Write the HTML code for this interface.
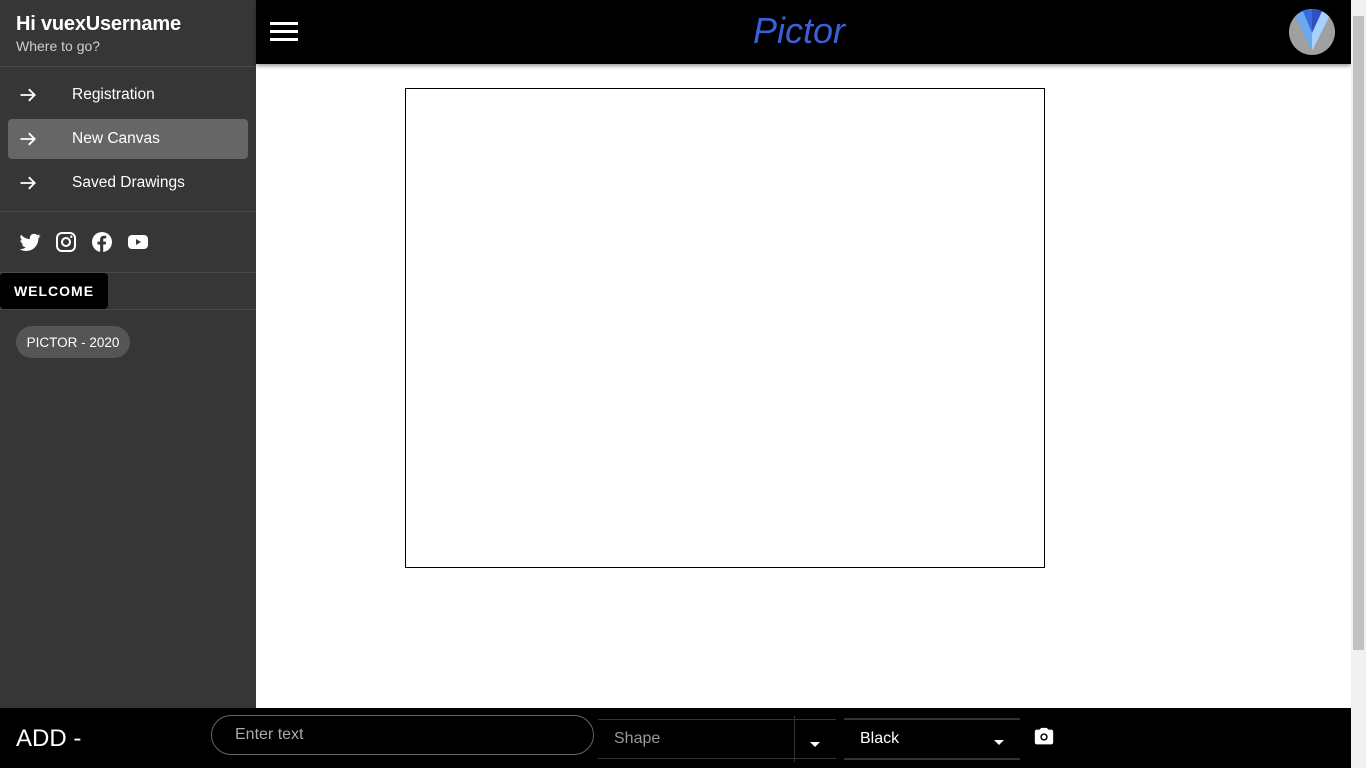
<!DOCTYPE html>
<html><head><meta charset="utf-8">
<style>
*{box-sizing:border-box;margin:0;padding:0}
body{width:1366px;height:768px;overflow:hidden;background:#fff;font-family:"Liberation Sans",sans-serif;position:relative}
.side{position:absolute;left:0;top:0;width:256px;height:708px;background:#363636;color:#fff}
.hd{height:67px;border-bottom:1px solid #4a4a4a;padding:12px 16px}
.hd .t{font-size:20px;font-weight:bold;line-height:24px;letter-spacing:-0.2px}
.hd .s{font-size:14px;color:#cfcfcf;line-height:20px}
.nav{padding:8px;border-bottom:1px solid #4a4a4a;height:145px}
.it{height:40px;border-radius:4px;margin-bottom:4px;display:flex;align-items:center;font-size:15.5px}
.it.a{background:#666}
.it svg{margin-left:10px;margin-right:34px}
.soc{height:61px;border-bottom:1px solid #4a4a4a;display:flex;align-items:center;padding-left:18px;gap:12px}
.wel{position:absolute;left:0;top:273px;width:108px;height:36px;background:#000;border-radius:4px;font-size:14px;font-weight:bold;letter-spacing:1px;display:flex;align-items:center;justify-content:center}
.ln{position:absolute;left:0;top:309px;width:256px;height:1px;background:#4a4a4a}
.chip{position:absolute;left:16px;top:326px;width:114px;height:32px;border-radius:16px;background:#555;font-size:13.5px;display:flex;align-items:center;justify-content:center}
.top{position:absolute;left:256px;top:0;width:1095px;height:64px;background:#000;box-shadow:0 2px 4px rgba(0,0,0,.4)}
.ham{position:absolute;left:14px;top:22px;width:28px}
.ham i{display:block;height:3px;background:#fff;margin-bottom:5px}
.title{position:absolute;left:497px;top:10px;font-size:36px;font-style:italic;color:#3b5fd6}
.canvas{position:absolute;left:405px;top:88px;width:640px;height:480px;border:1px solid #000}
.foot{position:absolute;left:0;top:708px;width:1351px;height:60px;background:#000;color:#fff}
.add{position:absolute;left:16px;top:17px;font-size:24px}
.inp{position:absolute;left:211px;top:7px;width:383px;height:40px;border:1px solid #666;border-radius:20px;padding-left:23px;font-size:16px;color:#aaa;line-height:38px}
.sh{position:absolute;left:598px;top:11px;width:238px;height:40px;border-top:1px solid #333;border-bottom:1px solid #333;font-size:16px;color:#999;padding-left:16px;line-height:38px}
.sh .v{position:absolute;left:196px;top:-4px;width:1px;height:46px;background:#333}
.car{position:absolute;width:0;height:0;border-left:5px solid transparent;border-right:5px solid transparent;border-top:5px solid #fff}
.bl{position:absolute;left:844px;top:10px;width:176px;height:42px;border-top:2px solid #333;border-bottom:2px solid #333;font-size:16px;padding-left:16px;line-height:38px}
.sb{position:absolute;left:1351px;top:0;width:15px;height:768px;background:#f1f1f1}
.sb .th{position:absolute;left:2px;top:16px;width:11px;height:634px;background:#c1c1c1}
</style></head><body>
<div class="side">
 <div class="hd"><div class="t">Hi vuexUsername</div><div class="s">Where to go?</div></div>
 <div class="nav">
  <div class="it"><svg width="20" height="20" viewBox="0 0 24 24"><path d="M3 12h17M13 5l7 7-7 7" stroke="#fff" stroke-width="2.2" fill="none"/></svg>Registration</div>
  <div class="it a"><svg width="20" height="20" viewBox="0 0 24 24"><path d="M3 12h17M13 5l7 7-7 7" stroke="#fff" stroke-width="2.2" fill="none"/></svg>New Canvas</div>
  <div class="it"><svg width="20" height="20" viewBox="0 0 24 24"><path d="M3 12h17M13 5l7 7-7 7" stroke="#fff" stroke-width="2.2" fill="none"/></svg>Saved Drawings</div>
 </div>
 <div class="soc">
  <svg width="24" height="24" viewBox="0 0 24 24"><path fill="#fff" d="M22.5 5.9c-.8.4-1.6.6-2.5.7.9-.5 1.6-1.4 1.900-2.4-.8.5-1.8.8-2.700 1-.8-.9-1.900-1.400-3.100-1.400-2.400 0-4.300 1.900-4.300 4.300 0 .3 0 .7.1 1-3.600-.2-6.800-1.900-8.900-4.500-.4.6-.6 1.400-.6 2.200 0 1.500.8 2.800 1.900 3.600-.7 0-1.400-.2-1.900-.5v.1c0 2.100 1.500 3.800 3.400 4.200-.6.2-1.300.2-1.900.1.5 1.700 2.100 3 4 3-1.500 1.200-3.300 1.800-5.300 1.800H1.600c1.900 1.200 4.200 1.900 6.600 1.900 7.900 0 12.200-6.500 12.200-12.200v-.6c.9-.6 1.600-1.300 2.100-2.300z"/></svg>
  <svg width="24" height="24" viewBox="0 0 24 24"><rect x="3" y="3" width="18" height="18" rx="5" stroke="#fff" stroke-width="2" fill="none"/><circle cx="12" cy="12" r="4" stroke="#fff" stroke-width="2" fill="none"/><circle cx="17.3" cy="6.7" r="1.2" fill="#fff"/></svg>
  <svg width="24" height="24" viewBox="0 0 24 24"><circle cx="12" cy="12" r="10" fill="#fff"/><path fill="#363636" d="M13.2 22V14.5h2.5l.4-2.9h-2.9V9.8c0-.8.3-1.4 1.4-1.4h1.6V5.8c-.3 0-1.2-.1-2.3-.1-2.3 0-3.8 1.4-3.8 3.9v2H7.5v2.9h2.6V22z"/></svg>
  <svg width="24" height="24" viewBox="0 0 24 24"><rect x="2" y="5" width="20" height="14" rx="4" fill="#fff"/><path d="M10 9l5 3-5 3z" fill="#363636"/></svg>
 </div>
 <div class="wel">WELCOME</div>
 <div class="ln"></div>
 <div class="chip">PICTOR - 2020</div>
</div>
<div class="top">
 <div class="ham"><i></i><i></i><i></i></div>
 <div class="title">Pictor</div>
 <svg style="position:absolute;left:1033px;top:9px" width="46" height="46" viewBox="0 0 46 46"><defs><clipPath id="c"><circle cx="23" cy="23" r="23"/></clipPath></defs><g clip-path="url(#c)"><rect width="46" height="46" fill="#a0a0a0"/><path d="M3 0H23V42Z" fill="#6aa8f0"/><path d="M23 0H44L23 42Z" fill="#a8d0ff"/><path d="M13 0H23V24Z" fill="#3a6ae0"/><path d="M23 0H34L23 24Z" fill="#2f4fc0"/></g></svg>
</div>
<div class="canvas"></div>
<div class="foot">
 <div class="add">ADD -</div>
 <div class="inp">Enter text</div>
 <div class="sh">Shape<div class="v"></div><div class="car" style="left:212px;top:22px"></div></div>
 <div class="bl">Black<div class="car" style="left:150px;top:20px"></div></div>
 <svg style="position:absolute;left:1033px;top:18px" width="22" height="22" viewBox="0 0 24 24"><path fill="#fff" d="M9 2L7.2 4H4c-1.1 0-2 .9-2 2v12c0 1.1.9 2 2 2h16c1.1 0 2-.9 2-2V6c0-1.1-.9-2-2-2h-3.2L15 2z"/><circle cx="12" cy="12" r="4" fill="#000"/><circle cx="12" cy="12" r="2.4" fill="#fff"/></svg>
</div>
<div class="sb"><div class="th"></div></div>
</body></html>
